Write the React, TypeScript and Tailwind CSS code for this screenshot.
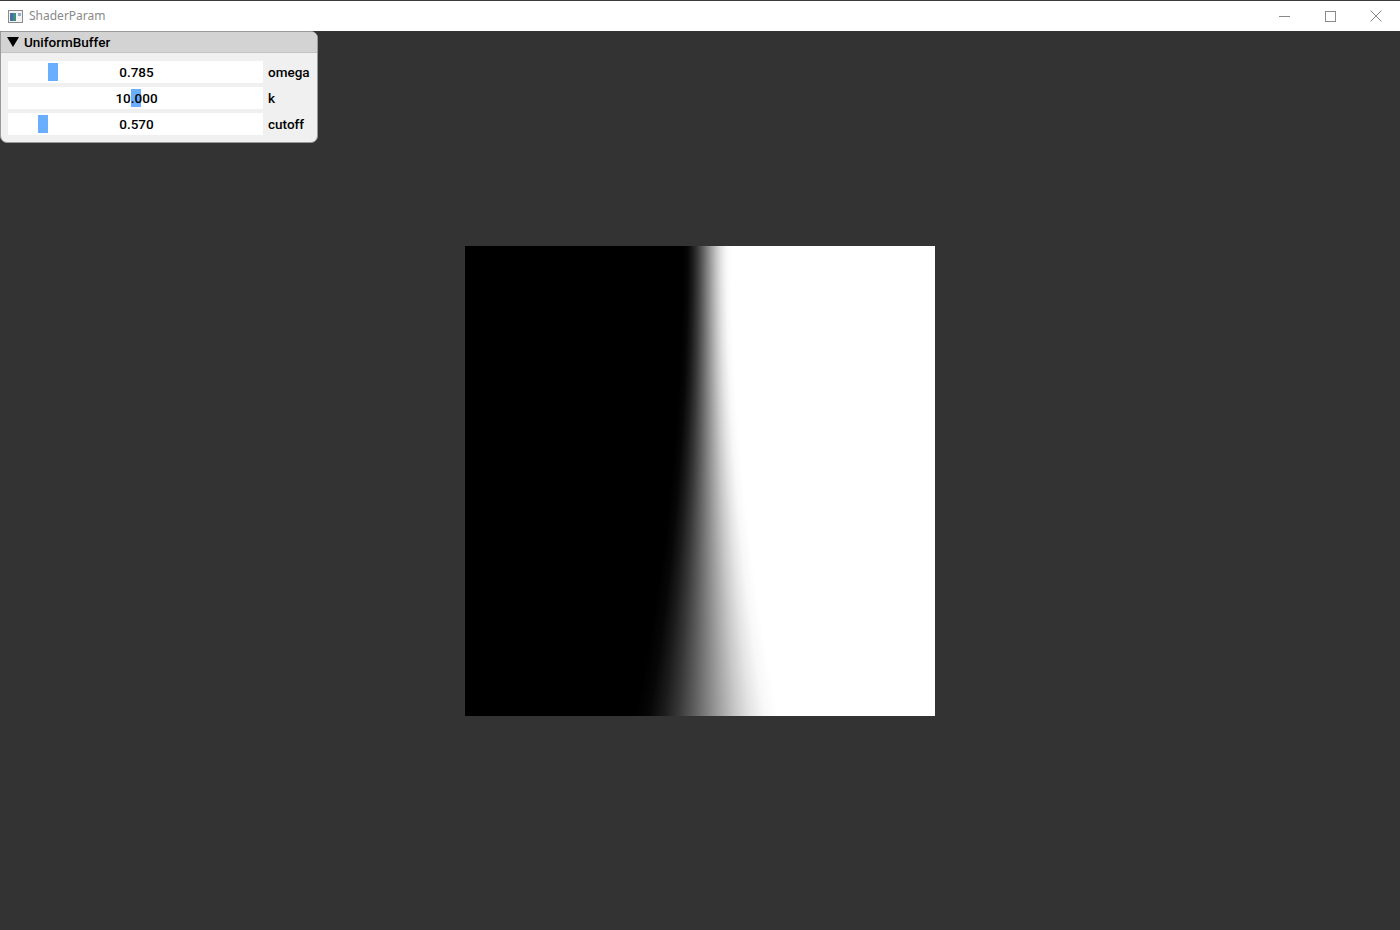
import React from 'react';

const SIZE = 470;
const STRIP = 2;
const CENTER = 242;

// smoothstep edge whose width grows toward the bottom
const halfWidth = (t: number) => 24 + 48 * t * t;
const smooth = (x: number) => x * x * (3 - 2 * x);

const ShaderView: React.FC = () => {
  const strips = [];
  for (let y = 0; y < SIZE; y += STRIP) {
    const t = (y + STRIP / 2) / SIZE;
    const w = halfWidth(t);
    strips.push({ y, x1: CENTER - w, x2: CENTER + w });
  }
  const stops = [0, 0.1, 0.2, 0.3, 0.4, 0.5, 0.6, 0.7, 0.8, 0.9, 1];
  return (
    <svg width={SIZE} height={SIZE} viewBox={`0 0 ${SIZE} ${SIZE}`} className="block" shapeRendering="crispEdges">
      <defs>
        {strips.map((s, i) => (
          <linearGradient key={i} id={`g${i}`} gradientUnits="userSpaceOnUse" x1={s.x1} y1="0" x2={s.x2} y2="0">
            {stops.map((o) => {
              const v = Math.round(smooth(o) * 255);
              return <stop key={o} offset={o} stopColor={`rgb(${v},${v},${v})`} />;
            })}
          </linearGradient>
        ))}
      </defs>
      {strips.map((s, i) => (
        <rect key={i} x="0" y={s.y} width={SIZE} height={STRIP} fill={`url(#g${i})`} />
      ))}
    </svg>
  );
};

interface SliderRowProps {
  value: string;
  label: string;
  grab: number;
}

const SliderRow: React.FC<SliderRowProps> = ({ value, label, grab }) => (
  <div className="flex items-center h-[22px]">
    <div className="relative w-[255px] h-[22px] bg-white flex items-center justify-center">
      <div className="absolute top-[2px] w-[10px] h-[18px] bg-[#6aaeff]" style={{ left: grab }} />
      <span className="relative ml-[2px] text-[13.5px] font-medium text-black">{value}</span>
    </div>
    <span className="ml-[5px] text-[13.5px] font-medium text-black">{label}</span>
  </div>
);

const App: React.FC = () => {
  return (
    <div className="w-[1400px] h-[930px] bg-[#333333] flex flex-col overflow-hidden" style={{ fontFamily: 'Roboto, "Noto Sans", sans-serif' }}>
      {/* title bar */}
      <div className="h-[31px] border-t border-[#3a3a3a] bg-white flex items-center shrink-0">
        <svg width="15" height="13" viewBox="0 0 15 13" className="ml-[8px]">
          <rect x="0.5" y="0.5" width="14" height="12" fill="#f4f4f4" stroke="#8a8a8a" />
          <rect x="2" y="3" width="6" height="8" fill="#3f8f7f" />
          <rect x="2" y="3" width="3" height="8" fill="#4a6aa8" />
          <rect x="10" y="3" width="3" height="3" fill="#8fb0c8" />
        </svg>
        <span className="ml-[6px] text-[12px] text-[#8a8a8a]" style={{ fontFamily: '"Noto Sans", "Liberation Sans", sans-serif' }}>
          ShaderParam
        </span>
        <div className="ml-auto flex items-center h-full">
          <div className="w-[46px] h-full flex items-center justify-center">
            <svg width="11" height="11" viewBox="0 0 11 11"><path d="M0 5.5H11" stroke="#8a8a8a" strokeWidth="1" /></svg>
          </div>
          <div className="w-[46px] h-full flex items-center justify-center">
            <svg width="11" height="11" viewBox="0 0 11 11"><rect x="0.5" y="0.5" width="10" height="10" fill="none" stroke="#8a8a8a" /></svg>
          </div>
          <div className="w-[46px] h-full flex items-center justify-center mr-[1px]">
            <svg width="12" height="12" viewBox="0 0 12 12"><path d="M0.5 0.5L11.5 11.5M11.5 0.5L0.5 11.5" stroke="#8a8a8a" strokeWidth="1" /></svg>
          </div>
        </div>
      </div>

      {/* client area */}
      <div className="relative flex-1 flex items-center justify-center">
        <ShaderView />

        <div className="absolute left-0 top-0 w-[318px] h-[112px] bg-[#f0f0f0] border border-[#9a9a9a] rounded-b-[7px] rounded-tr-[7px] overflow-hidden">
          <div className="h-[21px] bg-[#d3d3d3] border-b border-[#c4c4c4] flex items-center">
            <svg width="12" height="10" viewBox="0 0 12 10" className="ml-[6px]">
              <path d="M0 0H12L6 10Z" fill="#000" />
            </svg>
            <span className="ml-[5px] text-[13.5px] font-medium text-black">UniformBuffer</span>
          </div>
          <div className="pt-[8px] pl-[7px] flex flex-col gap-[4px]">
            <SliderRow value="0.785" label="omega" grab={40} />
            <SliderRow value="10.000" label="k" grab={123} />
            <SliderRow value="0.570" label="cutoff" grab={30} />
          </div>
        </div>
      </div>
    </div>
  );
};

export default App;
